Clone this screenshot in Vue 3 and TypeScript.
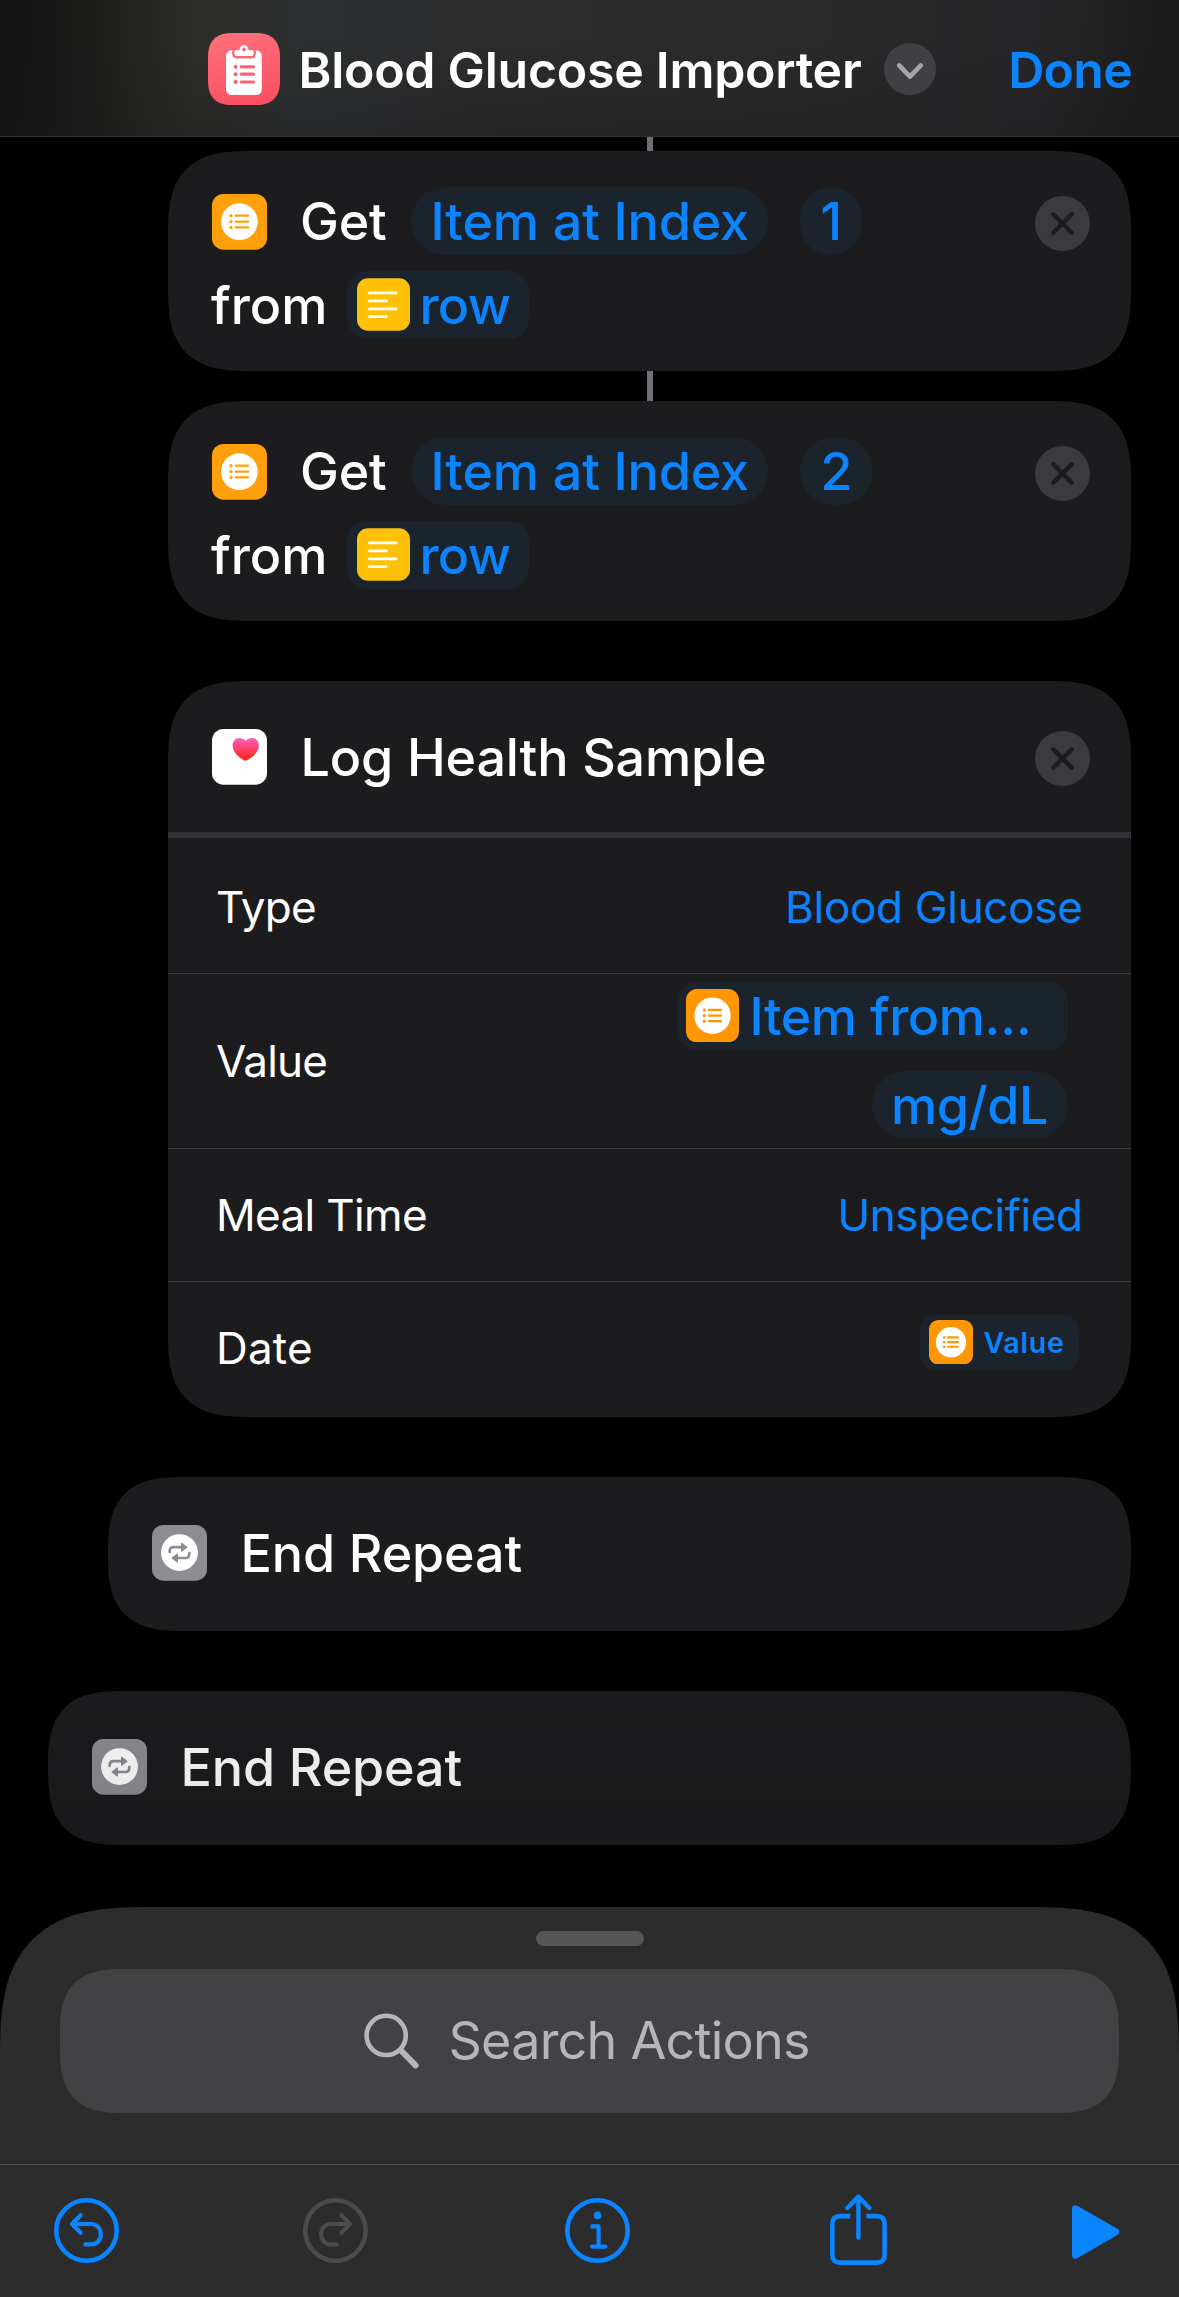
<script setup lang="ts">
interface IndexAction {
  index: string
  variable: string
}

const indexActions: IndexAction[] = [
  { index: '1', variable: 'row' },
  { index: '2', variable: 'row' },
]

const endRepeats: { depth: number }[] = [{ depth: 1 }, { depth: 0 }]

const listLines: number[] = [21.7, 27.6, 33.4]
</script>

<template>
  <div class="screen">
    <header class="header">
      <svg class="app-icon" viewBox="0 0 72 72">
        <defs>
          <linearGradient id="pink" x1="0" y1="0" x2="0.25" y2="1">
            <stop offset="0" stop-color="#fe717c" />
            <stop offset="1" stop-color="#fb5263" />
          </linearGradient>
        </defs>
        <path d="M24 0H48C64 0 72 8 72 24V48C72 64 64 72 48 72H24C8 72 0 64 0 48V24C0 8 8 0 24 0Z" fill="url(#pink)" />
        <rect x="18" y="17.3" width="35.8" height="44.7" rx="5.5" fill="#fff" />
        <path
          d="M28 17.2H30.6C31.3 17.2 31.5 16.8 31.7 16C32.2 13.6 33.8 12 36 12C38.2 12 39.8 13.6 40.3 16C40.5 16.8 40.7 17.2 41.4 17.2H44C45 17.2 45.6 17.9 45.6 18.8V20.8C45.6 22.3 44.6 23.1 43.2 23.1H28.8C27.4 23.1 26.4 22.3 26.4 20.8V18.8C26.4 17.9 27 17.2 28 17.2Z"
          fill="#fff" stroke="#fe6875" stroke-width="4.6" paint-order="stroke" />
        <circle cx="36" cy="16.6" r="1.9" fill="#fe6875" />
        <g fill="#fc6270">
          <circle v-for="y in [33.8, 41.2, 49]" :key="y" cx="27.6" :cy="y" r="2" />
        </g>
        <path d="M33.2 33.8H45.4M33.2 41.2H45.4M33.2 49H45.4" stroke="#fc6270" stroke-width="3.2" stroke-linecap="round" />
      </svg>
      <h1 class="title">Blood Glucose Importer</h1>
      <svg class="chevron" viewBox="0 0 52 52">
        <circle cx="26" cy="26" r="26" fill="#403f44" />
        <path d="M15.2 22.4L26 33.6L36.8 22.4" fill="none" stroke="#a5a5ad" stroke-width="4.6" stroke-linecap="round" stroke-linejoin="round" />
      </svg>
      <span class="done">Done</span>
    </header>

    <main class="flow">
      <div class="connector first" />
      <template v-for="(action, i) in indexActions" :key="action.index">
        <section class="card action">
          <div class="line line-one">
            <svg class="tile" viewBox="0 0 55 56">
              <rect width="55" height="55.7" rx="11.5" fill="#ff9f0c" />
              <circle cx="27.4" cy="27.7" r="18.4" fill="#fff" />
              <g v-for="y in listLines" :key="y" fill="#ff9f0c">
                <circle cx="19" :cy="y" r="1.6" />
                <rect x="22.6" :y="y - 1.15" width="14.6" height="2.3" rx="1" />
              </g>
            </svg>
            <span class="word get">Get</span>
            <span class="pill item"><span>Item at Index</span></span>
            <span class="pill number"><span>{{ action.index }}</span></span>
            <svg class="close" viewBox="0 0 55 55">
              <circle cx="27.5" cy="27.5" r="27.5" fill="#3b3a3e" />
              <path d="M18.3 18.3L36.7 36.7M36.7 18.3L18.3 36.7" stroke="#1c1c1e" stroke-width="4.4" stroke-linecap="round" />
            </svg>
          </div>
          <div class="line line-two">
            <span class="word from">from</span>
            <span class="variable row-variable">
              <svg class="small-tile" viewBox="0 0 53 53">
                <rect width="53" height="52.6" rx="11" fill="#ffc107" />
                <path d="M12.5 14.7H39M12.5 22.7H29.4M12.5 30.7H39M12.5 38.4H29.4" stroke="#fff" stroke-width="2.8" stroke-linecap="round" />
              </svg>
              <span>{{ action.variable }}</span>
            </span>
          </div>
        </section>
        <div v-if="i === 0" class="connector" />
      </template>

      <section class="card health">
        <div class="health-head">
          <svg class="tile" viewBox="0 0 55 56">
            <defs>
              <linearGradient id="heart" x1="0" y1="0" x2="0" y2="1">
                <stop offset="0" stop-color="#fb5fc0" />
                <stop offset="1" stop-color="#ff2310" />
              </linearGradient>
            </defs>
            <rect width="55" height="55.7" rx="11.5" fill="#fff" />
            <path d="M33.7 31.8C32.2 31.5 20.6 25.4 20.6 16.4C20.6 12 23.4 9 27.2 9C30.2 9 32.4 10.4 33.7 12C35 10.4 37.2 9 40.2 9C44 9 46.8 12 46.8 16.4C46.8 25.4 35.2 31.5 33.7 31.8Z" fill="url(#heart)" />
          </svg>
          <span class="word log">Log Health Sample</span>
          <svg class="close" viewBox="0 0 55 55">
            <circle cx="27.5" cy="27.5" r="27.5" fill="#3b3a3e" />
            <path d="M18.3 18.3L36.7 36.7M36.7 18.3L18.3 36.7" stroke="#1c1c1e" stroke-width="4.4" stroke-linecap="round" />
          </svg>
        </div>
        <div class="field type">
          <span class="label tight">Type</span>
          <span class="choice">Blood Glucose</span>
        </div>
        <div class="field value">
          <span class="label tight">Value</span>
          <div class="stack">
            <span class="variable item-variable">
              <svg class="small-tile" viewBox="0 0 55 55.4">
                <rect width="55" height="55.4" rx="11.5" fill="#ff9602" />
                <circle cx="27.5" cy="27.7" r="18.9" fill="#fff" />
                <g v-for="y in listLines" :key="y" fill="#ff9602">
                  <circle cx="19" :cy="y" r="1.6" />
                  <rect x="22.6" :y="y - 1.2" width="14.8" height="2.4" rx="1" />
                </g>
              </svg>
              <span>Item from…</span>
            </span>
            <span class="pill unit"><span>mg/dL</span></span>
          </div>
        </div>
        <div class="field meal">
          <span class="label meal-label">Meal Time</span>
          <span class="choice unspecified">Unspecified</span>
        </div>
        <div class="field date">
          <span class="label date-label">Date</span>
          <span class="variable date-variable">
            <svg class="mini-tile" viewBox="0 0 55 55.4">
              <rect width="55" height="55.4" rx="11.5" fill="#ff9602" />
              <circle cx="27.5" cy="27.7" r="18.9" fill="#fff" />
              <g v-for="y in listLines" :key="y" fill="#ff9602">
                <circle cx="19" :cy="y" r="1.7" />
                <rect x="22.6" :y="y - 1.3" width="14.8" height="2.6" rx="1" />
              </g>
            </svg>
            <span>Value</span>
          </span>
        </div>
      </section>

      <section v-for="block in endRepeats" :key="block.depth" class="card end" :class="`depth-${block.depth}`">
        <svg class="tile" viewBox="0 0 55 56">
          <rect width="55" height="55.7" rx="11.5" fill="#8e8d94" />
          <circle cx="27.5" cy="27.6" r="18.4" fill="#fff" />
          <g fill="none" stroke="#8e8d94" stroke-width="2.7" stroke-linecap="round">
            <path d="M17.7 27V26C17.7 23.6 19.4 22.2 21.8 22.2H30" />
            <path d="M37.3 28V29C37.3 31.4 35.6 33 33.2 33H25" />
          </g>
          <g fill="#8e8d94" stroke="#8e8d94" stroke-width="1.2" stroke-linejoin="round">
            <path d="M29.6 18.3L34.9 22.2L29.6 26.2Z" />
            <path d="M25.4 29L20.1 33L25.4 36.9Z" />
          </g>
        </svg>
        <span class="word">End Repeat</span>
      </section>
      <div class="fade" />
    </main>

    <footer class="sheet">
      <div class="grabber" />
      <div class="search">
        <svg class="magnifier" viewBox="0 0 56 56">
          <circle cx="22.2" cy="22.4" r="19.6" fill="none" stroke="#b6b6b9" stroke-width="4.6" />
          <path d="M36.6 37.2L51.6 52.4" stroke="#b6b6b9" stroke-width="6" stroke-linecap="round" />
        </svg>
        <span>Search Actions</span>
      </div>
      <nav class="toolbar">
        <svg class="tool undo" viewBox="0 0 65 65">
          <circle cx="32.5" cy="32.5" r="30.2" />
          <path d="M26.6 17.2L18 26L26.6 34.8M18.6 26H37.2C42.8 26 46.8 30.4 46.8 36.2C46.8 42 42.8 46.4 37.2 46.4H31.3" />
        </svg>
        <svg class="tool redo" viewBox="0 0 65 65">
          <circle cx="32.5" cy="32.5" r="30.2" />
          <path d="M38.4 17.2L47 26L38.4 34.8M46.4 26H27.8C22.2 26 18.2 30.4 18.2 36.2C18.2 42 22.2 46.4 27.8 46.4H33.7" />
        </svg>
        <svg class="tool info" viewBox="0 0 65 65">
          <circle cx="32.5" cy="32.5" r="30.2" />
          <circle class="dot" cx="32.6" cy="17.4" r="3.8" />
          <path d="M27.2 28.4H33.6V48.6M27 48.6H40.4" />
        </svg>
        <svg class="share" viewBox="0 0 57 71">
          <path d="M20.4 22.1H10C5 22.1 2.4 24.8 2.4 29.8V61C2.4 66 5 68.6 10 68.6H47C52 68.6 54.6 66 54.6 61V29.8C54.6 24.8 52 22.1 47 22.1H36.4" />
          <path class="arrow" d="M28.4 3V43.6M17.4 14L28.4 2.6L39.4 14" />
        </svg>
        <svg class="play" viewBox="0 0 47 54">
          <path d="M3.5 3.7L43.6 26.9L3.5 50.2Z" />
        </svg>
      </nav>
    </footer>
  </div>
</template>

<style>
body {
  background: #000;
}
</style>

<style scoped>
.screen {
  display: flex;
  flex-direction: column;
  width: 1179px;
  height: 2297px;
  overflow: hidden;
  background: #000;
  color: #fff;
  font-family: Inter, 'Liberation Sans', sans-serif;
  font-size: 52px;
  font-weight: 500;
  line-height: 68px;
  white-space: nowrap;
}

svg {
  display: block;
  flex: none;
}

.header {
  display: flex;
  flex: none;
  align-items: center;
  box-sizing: border-box;
  height: 137px;
  padding: 2px 47px 0 208px;
  border-bottom: 1px solid #2e2f2f;
  background:
    linear-gradient(to bottom, transparent 30%, rgba(24, 24, 26, 0.3)),
    linear-gradient(92deg, #141414 0, #191918 70px, #22221f 125px, #2d2d28 195px, #2d3031 300px, #2c2c2d 470px, #2a2a2b 800px, #262628 1040px, #1b1b1c 1179px);
}

.app-icon {
  width: 72px;
  height: 72px;
}

.title {
  margin: 1px 0 0 18.5px;
  font-size: 50px;
  font-weight: 600;
  letter-spacing: -0.27px;
}

.chevron {
  width: 52px;
  height: 52px;
  margin-left: 22.5px;
}

.done {
  margin: 1px 0 0 auto;
  color: #0a84ff;
  font-size: 50px;
  font-weight: 600;
  letter-spacing: -0.71px;
}

.flow {
  position: relative;
  display: flex;
  flex: none;
  flex-direction: column;
  align-items: flex-end;
  height: 1770px;
  padding-right: 48px;
}

.connector {
  width: 6px;
  height: 30px;
  margin-right: 478px;
  background: #6e6f77;
}

.connector.first {
  height: 14px;
}

.card {
  box-sizing: border-box;
  flex: none;
  width: 963px;
  border-radius: 60px;
  background: #1c1c1e;
}

@supports (corner-shape: superellipse(1.5)) {
  .card {
    border-radius: 84px;
    corner-shape: superellipse(1.5);
  }
}

.action {
  height: 220px;
  padding: 36px 41px 0 44px;
}

.line {
  display: flex;
  align-items: center;
}

.line-one {
  height: 68px;
}

.line-two {
  height: 68px;
  margin-top: 16px;
}

.tile {
  width: 55px;
  height: 56px;
}

.line-one .tile {
  margin-top: 1px;
}

.get {
  margin: 2px 0 0 33px;
  letter-spacing: -0.21px;
}

.pill {
  box-sizing: border-box;
  height: 68px;
  border-radius: 34px;
  background: #1b232d;
  color: #0a84ff;
}

.item,
.number {
  line-height: 70px;
}

.item {
  width: 356.5px;
  margin-left: 24.5px;
  padding-left: 19.5px;
  letter-spacing: -0.1px;
}

.number {
  margin-left: 32px;
  padding: 0 20px 0 21px;
}

.close {
  width: 55px;
  height: 55px;
  margin: 5px 0 0 auto;
}

.from {
  margin: 1px 0 0 -1px;
}

.variable {
  display: flex;
  align-items: center;
  box-sizing: border-box;
  border-radius: 20px;
  background: #1b232d;
  color: #0a84ff;
}

.row-variable {
  width: 181.5px;
  height: 68px;
  margin-left: 20px;
  padding-left: 9.5px;
  letter-spacing: -0.7px;
}

.row-variable span {
  margin: 1px 0 0 9.5px;
}

.small-tile {
  width: 53px;
  height: 53.4px;
}

.health {
  height: 736px;
  margin-top: 60px;
  overflow: hidden;
}

.health-head {
  display: flex;
  align-items: center;
  box-sizing: border-box;
  height: 157px;
  padding: 1px 41px 0 44px;
  border-bottom: 6px solid #313034;
}

.log {
  margin: 1px 0 0 33.5px;
  letter-spacing: -0.12px;
}

.health-head .close {
  margin-top: 3px;
}

.field {
  display: flex;
  align-items: center;
  justify-content: space-between;
  box-sizing: border-box;
  padding: 0 48.5px 0 48px;
  border-bottom: 1px solid #3b3b3e;
  font-size: 44px;
  font-weight: 400;
}

.tight {
  letter-spacing: -0.8px;
}

.type {
  height: 136px;
  padding-top: 3px;
}

.choice {
  color: #0a84ff;
  letter-spacing: -0.31px;
}

.unspecified {
  letter-spacing: -0.44px;
}

.value {
  height: 175px;
  padding-right: 63px;
}

.stack {
  display: flex;
  flex-direction: column;
  align-items: flex-end;
  gap: 20.5px;
  margin-top: -1px;
  font-size: 52px;
  font-weight: 500;
}

.item-variable {
  width: 391px;
  height: 68px;
  padding: 0 0 1px 9px;
  letter-spacing: -0.46px;
}

.item-variable span {
  margin: 3px 0 0 10.5px;
}

.unit {
  padding: 0 20px 0 19px;
  letter-spacing: -0.44px;
  line-height: 69px;
}

.meal {
  height: 133px;
}

.meal-label {
  letter-spacing: -0.65px;
}

.date {
  height: 135px;
  padding-right: 52px;
  border-bottom: 0;
}

.date-label {
  margin-top: -3px;
  letter-spacing: 0.19px;
}

.date-variable {
  width: 159px;
  height: 55px;
  margin-top: -15px;
  padding-left: 9px;
  border-radius: 15px;
  font-size: 28.5px;
  font-weight: 600;
  letter-spacing: 0.75px;
}

.date-variable span {
  margin: 2px 0 0 10.5px;
}

.mini-tile {
  width: 44px;
  height: 44.4px;
}

.end {
  display: flex;
  align-items: center;
  height: 154px;
  margin-top: 60px;
  padding: 0 44px 2px;
}

.end .word {
  margin: 1px 0 0 33.5px;
  letter-spacing: -0.1px;
}

.depth-1 {
  width: 1023px;
}

.depth-0 {
  width: 1083px;
}

.fade {
  position: absolute;
  right: 0;
  bottom: 0;
  left: 0;
  height: 290px;
  background: linear-gradient(to bottom, rgba(0, 0, 0, 0), rgba(0, 0, 0, 0.14));
}

.sheet {
  box-sizing: border-box;
  flex: none;
  height: 390px;
  padding-top: 24px;
  border-radius: 100px 100px 0 0;
  background: #2c2c2c;
}

@supports (corner-shape: superellipse(1.5)) {
  .sheet {
    border-radius: 150px 150px 0 0;
    corner-shape: superellipse(1.5);
  }
}

.grabber {
  width: 108px;
  height: 15px;
  margin: 0 auto;
  border-radius: 8px;
  background: #565656;
}

.search {
  display: flex;
  align-items: center;
  box-sizing: border-box;
  width: 1059px;
  height: 144px;
  margin: 23px 60px 0;
  padding-left: 303.5px;
  border-radius: 48px;
  background: #424244;
  color: #b6b6b9;
  font-weight: 400;
  letter-spacing: -0.75px;
}

@supports (corner-shape: superellipse(1.5)) {
  .search {
    border-radius: 66px;
    corner-shape: superellipse(1.5);
  }
}

.magnifier {
  width: 56px;
  height: 56px;
  margin-right: 29px;
}

.toolbar {
  display: flex;
  align-items: flex-start;
  box-sizing: border-box;
  height: 133px;
  margin-top: 51px;
  padding: 33px 0 0 54px;
  border-top: 1px solid #4b4b4b;
}

.tool,
.share {
  fill: none;
  stroke: #0a84ff;
  stroke-width: 4.6;
  stroke-linecap: round;
  stroke-linejoin: round;
}

.tool {
  width: 65px;
  height: 65px;
}

.tool path {
  stroke-width: 4.2;
}

.tool .dot {
  fill: #0a84ff;
  stroke: none;
}

.redo {
  margin-left: 184px;
  stroke: #4b4b4b;
}

.info {
  margin-left: 196.5px;
}

.share {
  width: 57px;
  height: 71px;
  margin: -4px 0 0 200.5px;
  stroke-linecap: butt;
}

.share .arrow {
  stroke-linecap: round;
  stroke-width: 4.4;
}

.play {
  width: 47px;
  height: 54px;
  margin: 7px 0 0 185px;
  fill: #0a84ff;
  stroke: #0a84ff;
  stroke-width: 7;
  stroke-linejoin: round;
}
</style>
